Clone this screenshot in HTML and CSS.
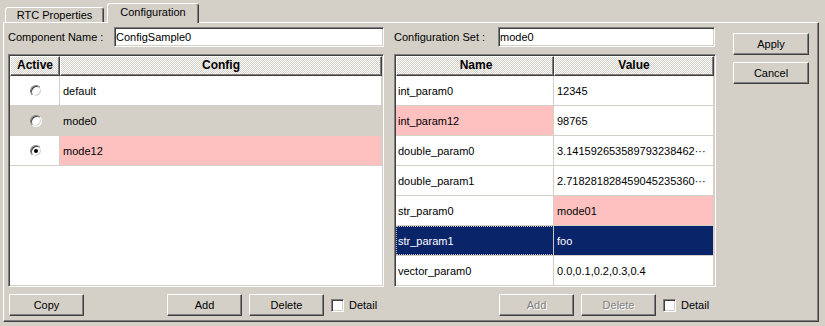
FILE: index.html
```html
<!DOCTYPE html>
<html lang="en">
<head>
  <meta charset="UTF-8">
  <title>Configuration</title>
  <link rel="stylesheet" href="styles.css">
</head>
<body>

<div class="tabs">
  <div class="tab">RTC Properties</div>
  <div class="tab active">Configuration</div>
</div>

<div class="panel">
  <div class="col left">
    <div class="field">
      <label>Component Name :</label>
      <input class="text comp-name" type="text" value="ConfigSample0" readonly>
    </div>
    <div class="grid">
      <div class="head">
        <div class="hc c-active">Active</div>
        <div class="hc c-fill">Config</div>
      </div>
      <div class="row">
        <div class="cell c-active"><span class="radio"></span></div>
        <div class="cell c-fill">default</div>
      </div>
      <div class="row gray">
        <div class="cell c-active"><span class="radio"></span></div>
        <div class="cell c-fill">mode0</div>
      </div>
      <div class="row">
        <div class="cell c-active"><span class="radio checked"></span></div>
        <div class="cell c-fill pink">mode12</div>
      </div>
    </div>
    <div class="btns">
      <button class="btn copy">Copy</button>
      <button class="btn add-left">Add</button>
      <button class="btn">Delete</button>
      <span class="check"></span>
      <span class="check-label">Detail</span>
    </div>
  </div>

  <div class="col right">
    <div class="field">
      <label>Configuration Set :</label>
      <input class="text set-name" type="text" value="mode0" readonly>
    </div>
    <div class="grid">
      <div class="head">
        <div class="hc c-name">Name</div>
        <div class="hc c-fill">Value</div>
      </div>
      <div class="row">
        <div class="cell c-name">int_param0</div>
        <div class="cell c-fill val">12345</div>
      </div>
      <div class="row">
        <div class="cell c-name pink">int_param12</div>
        <div class="cell c-fill val">98765</div>
      </div>
      <div class="row">
        <div class="cell c-name">double_param0</div>
        <div class="cell c-fill val">3.141592653589793238462&middot;&middot;&middot;</div>
      </div>
      <div class="row">
        <div class="cell c-name">double_param1</div>
        <div class="cell c-fill val">2.718281828459045235360&middot;&middot;&middot;</div>
      </div>
      <div class="row">
        <div class="cell c-name">str_param0</div>
        <div class="cell c-fill val pink">mode01</div>
      </div>
      <div class="row selected">
        <div class="cell c-name focus">str_param1</div>
        <div class="cell c-fill val">foo</div>
      </div>
      <div class="row">
        <div class="cell c-name">vector_param0</div>
        <div class="cell c-fill val">0.0,0.1,0.2,0.3,0.4</div>
      </div>
    </div>
    <div class="btns">
      <button class="btn add-right" disabled>Add</button>
      <button class="btn" disabled>Delete</button>
      <span class="check"></span>
      <span class="check-label">Detail</span>
    </div>
  </div>

  <div class="side">
    <button class="btn wide">Apply</button>
    <button class="btn wide">Cancel</button>
  </div>
</div>

</body>
</html>
```

FILE: styles.css
```css
body {
  margin: 0;
  width: 825px;
  height: 326px;
  overflow: hidden;
  background-color: #d4d0c8;
  font: 11px "Liberation Sans", Arial, sans-serif;
  color: #000;
}
.tabs {
  display: flex;
  align-items: flex-end;
  height: 22px;
  padding-left: 5px;
}
.tab {
  box-sizing: border-box;
  width: 99px;
  height: 15px;
  line-height: 14px;
  text-align: center;
  border: 1px solid;
  border-bottom: none;
  border-color: #fff #404040 #fff #fff;
  border-radius: 3px 3px 0 0;
  box-shadow: inset -1px 0 #808080;
}
.tab.active {
  position: relative;
  z-index: 1;
  width: 92px;
  height: 20px;
  line-height: 17px;
  margin-left: 3px;
  margin-bottom: -1px;
  background-color: #d4d0c8;
}
.panel {
  box-sizing: border-box;
  display: flex;
  width: 816px;
  height: 300px;
  margin-left: 3px;
  padding: 4px 0 0 4px;
  border: 1px solid;
  border-color: #fff #404040 #404040 #fff;
  box-shadow: inset -1px -1px #808080;
}
.col {
  display: flex;
  flex-direction: column;
}
.left { width: 376px; }
.right { width: 322px; margin-left: 10px; }
.field {
  display: flex;
  align-items: center;
  height: 20px;
}
.text {
  box-sizing: border-box;
  height: 20px;
  margin: 0 0 0 auto;
  padding: 0 1px;
  font: inherit;
  color: #000;
  background: #fff;
  outline: none;
  border: 1px solid;
  border-color: #808080 #fff #fff #808080;
  box-shadow: inset 1px 1px #404040, inset -1px -1px #d4d0c8;
}
.comp-name { width: 270px; }
.set-name { width: 217px; margin-right: 1px; }
.grid {
  box-sizing: border-box;
  height: 233px;
  margin-top: 7px;
  padding: 1px;
  background: #fff;
  border: 1px solid;
  border-color: #808080 #fff #fff #808080;
  box-shadow: inset 1px 1px #404040, inset -1px -1px #d4d0c8;
  overflow: hidden;
}
.head {
  display: flex;
  height: 20px;
}
.hc {
  box-sizing: border-box;
  line-height: 17px;
  text-align: center;
  font-size: 12px;
  font-weight: bold;
  background: repeating-conic-gradient(#d4d0c8 0 25%, #fff 0 50%) 0 0 / 2px 2px;
  border: 1px solid;
  border-color: #fff #404040 #404040 #fff;
  box-shadow: inset -1px -1px #808080;
}
.row {
  box-sizing: border-box;
  display: flex;
  height: 30px;
  border-bottom: 1px solid #d4d0c8;
}
.cell {
  box-sizing: border-box;
  display: flex;
  align-items: center;
  border-right: 1px solid #d4d0c8;
  white-space: nowrap;
  overflow: hidden;
}
.c-active { width: 50px; justify-content: center; }
.c-name { width: 158px; padding-left: 2px; }
.c-fill { flex: 1; }
.left .cell.c-fill { padding-left: 3px; }
.val { padding-left: 3px; }
.gray { background-color: #d4d0c8; }
.pink { background-color: #ffc0c0; }
.selected { background-color: #0a246a; color: #fff; }
.focus { outline: 1px dotted #c0c0c0; outline-offset: -1px; }
.radio {
  box-sizing: border-box;
  position: relative;
  width: 12px;
  height: 12px;
  margin-left: 2px;
  border-radius: 50%;
  background: #fff;
  border: 1px solid;
  border-color: #808080 #fff #fff #808080;
  box-shadow: inset 1px 1px #404040, inset -1px -1px #d4d0c8;
}
.radio.checked::after {
  content: "";
  position: absolute;
  left: 3px;
  top: 3px;
  width: 4px;
  height: 4px;
  border-radius: 50%;
  background: #000;
}
.btns {
  display: flex;
  align-items: center;
  height: 22px;
  margin-top: 7px;
}
.btn {
  box-sizing: border-box;
  width: 75px;
  height: 22px;
  padding: 0;
  margin-left: 7px;
  font: inherit;
  color: #000;
  background-color: #d4d0c8;
  border: 1px solid;
  border-color: #fff #404040 #404040 #fff;
  box-shadow: inset -1px -1px #808080;
}
.btn:disabled {
  color: #808080;
  text-shadow: 1px 1px #fff;
}
.copy { margin-left: 1px; }
.add-left { margin-left: 83px; }
.add-right { margin-left: 105px; }
.check {
  box-sizing: border-box;
  width: 13px;
  height: 13px;
  margin-left: 7px;
  background: #fff;
  border: 1px solid;
  border-color: #808080 #fff #fff #808080;
  box-shadow: inset 1px 1px #404040, inset -1px -1px #d4d0c8;
}
.check-label { margin-left: 5px; }
.side {
  display: flex;
  flex-direction: column;
  gap: 7px;
  margin-left: 17px;
  padding-top: 6px;
}
.btn.wide {
  width: 76px;
  margin-left: 0;
}
```
